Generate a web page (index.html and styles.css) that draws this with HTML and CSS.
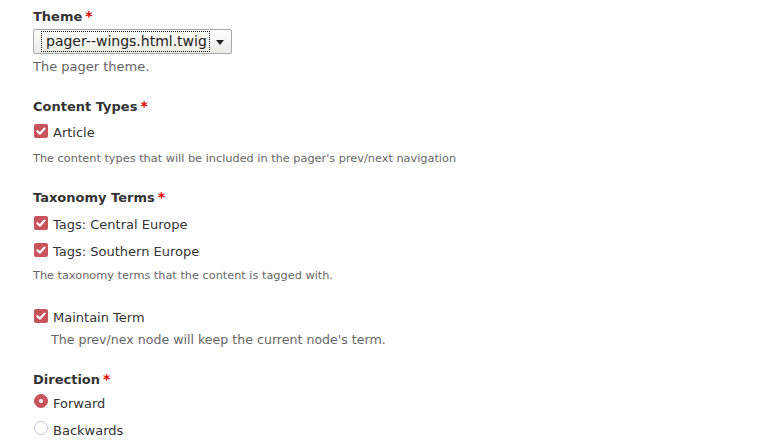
FILE: index.html
```html
<!DOCTYPE html>
<html>
<head>
<meta charset="utf-8">
<link rel="stylesheet" href="styles.css">
</head>
<body>
<form class="form">
  <div class="item item-theme">
    <div class="label">Theme<span class="req">*</span></div>
    <div class="select">
      <span class="select-value">pager--wings.html.twig</span>
      <span class="select-arrow"></span>
    </div>
    <div class="desc">The pager theme.</div>
  </div>

  <div class="item item-types">
    <div class="label">Content Types<span class="req">*</span></div>
    <div class="option first"><span class="check"><svg viewBox="0 0 14 14" width="14" height="14"><path d="M3.4 7.2 L6 9.6 L10.6 4.6" fill="none" stroke="#fff" stroke-width="2.2" stroke-linecap="round" stroke-linejoin="round"/></svg></span><span class="opt-label">Article</span></div>
    <div class="desc small">The content types that will be included in the pager's prev/next navigation</div>
  </div>

  <div class="item item-terms">
    <div class="label">Taxonomy Terms<span class="req">*</span></div>
    <div class="option first-terms"><span class="check"><svg viewBox="0 0 14 14" width="14" height="14"><path d="M3.4 7.2 L6 9.6 L10.6 4.6" fill="none" stroke="#fff" stroke-width="2.2" stroke-linecap="round" stroke-linejoin="round"/></svg></span><span class="opt-label">Tags: Central Europe</span></div>
    <div class="option"><span class="check"><svg viewBox="0 0 14 14" width="14" height="14"><path d="M3.4 7.2 L6 9.6 L10.6 4.6" fill="none" stroke="#fff" stroke-width="2.2" stroke-linecap="round" stroke-linejoin="round"/></svg></span><span class="opt-label">Tags: Southern Europe</span></div>
    <div class="desc small terms-desc">The taxonomy terms that the content is tagged with.</div>
  </div>

  <div class="item item-maintain">
    <div class="option"><span class="check"><svg viewBox="0 0 14 14" width="14" height="14"><path d="M3.4 7.2 L6 9.6 L10.6 4.6" fill="none" stroke="#fff" stroke-width="2.2" stroke-linecap="round" stroke-linejoin="round"/></svg></span><span class="opt-label">Maintain Term</span></div>
    <div class="desc indent">The prev/nex node will keep the current node's term.</div>
  </div>

  <div class="item item-direction">
    <div class="label">Direction<span class="req">*</span></div>
    <div class="option first-radio"><span class="radio checked"></span><span class="opt-label">Forward</span></div>
    <div class="option"><span class="radio"></span><span class="opt-label">Backwards</span></div>
  </div>
</form>
</body>
</html>
```

FILE: styles.css
```css
html, body {
  margin: 0;
  padding: 0;
  background: #fff;
}
body {
  font-family: "DejaVu Sans", "Liberation Sans", sans-serif;
  color: #333;
  font-size: 13px;
}
.form {
  padding: 7px 0 0 33px;
}
.label {
  font-weight: bold;
  font-size: 13px;
  line-height: 18px;
  color: #333;
}
.req {
  color: #e00000;
  margin-left: 3px;
  font-weight: bold;
  font-size: 14px;
}
.select {
  margin-top: 3px;
  width: 197px;
  height: 23px;
  border: 1px solid #a8a8a8;
  border-radius: 2px;
  background: linear-gradient(#fdfdfb, #ecece6);
  display: flex;
  align-items: center;
  box-sizing: content-box;
}
.select-value {
  margin-left: 7px;
  width: 169px;
  height: 21px;
  border: 1px dotted #111;
  box-sizing: border-box;
  font-size: 14px;
  line-height: 19px;
  padding-left: 4px;
  color: #222;
  white-space: nowrap;
  overflow: hidden;
}
.select-arrow {
  margin-left: 6px;
  margin-top: 1px;
  width: 0;
  height: 0;
  border-left: 4.5px solid transparent;
  border-right: 4.5px solid transparent;
  border-top: 5px solid #222;
}
.desc {
  margin-top: 4px;
  font-size: 13px;
  line-height: 18px;
  color: #666;
}
.desc.small {
  font-size: 11.3px;
  line-height: 16px;
  margin-top: 9px;
}
.desc.small.terms-desc {
  margin-top: 7px;
}
.desc.indent {
  padding-left: 18px;
  font-size: 12.6px;
}
.item-types {
  margin-top: 21px;
}
.item-terms {
  margin-top: 21px;
}
.item-maintain {
  margin-top: 25px;
}
.item-direction {
  margin-top: 21px;
}
.option {
  display: flex;
  align-items: flex-start;
  line-height: 18px;
  font-size: 13px;
  margin-top: 9px;
}
.option.first {
  margin-top: 8px;
}
.option.first-terms {
  margin-top: 9px;
}
.option.first-radio {
  margin-top: 6px;
}
.opt-label {
  margin-left: 5px;
  color: #333;
}
.check {
  width: 14px;
  height: 14px;
  border-radius: 2px;
  background: #c9535b;
  margin-left: 1px;
  display: block;
  flex: none;
}
.check svg {
  display: block;
}
.radio {
  width: 14px;
  height: 14px;
  border-radius: 50%;
  box-sizing: border-box;
  border: 1px solid #c6cedb;
  background: #fff;
  margin-left: 1px;
  margin-top: -1px;
  flex: none;
  position: relative;
}
.radio.checked {
  background: #c9535b;
  border-color: #c9535b;
}
.radio.checked::after {
  content: "";
  position: absolute;
  left: 4px;
  top: 4px;
  width: 4px;
  height: 4px;
  border-radius: 50%;
  background: #fff;
}
```
